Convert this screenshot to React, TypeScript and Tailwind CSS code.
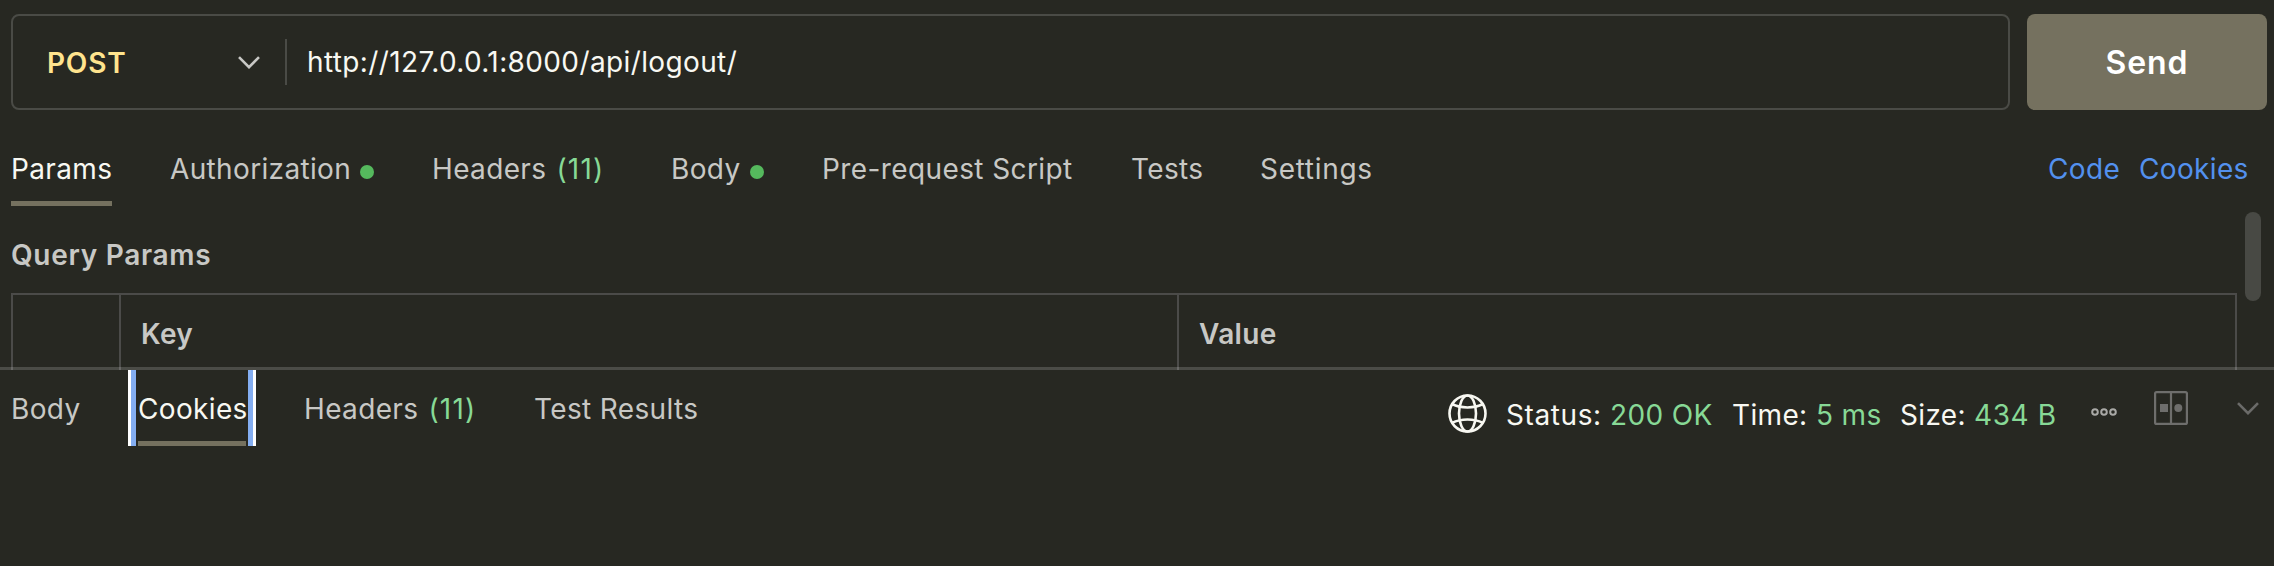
import type { ReactNode } from "react";

function Chevron({ className }: { className: string }) {
  return (
    <svg viewBox="0 0 22 13" fill="none" stroke="currentColor" strokeWidth="2.6" className={className}>
      <path d="M1 1.2 L11 11.2 L21 1.2" />
    </svg>
  );
}

function Globe() {
  return (
    <svg viewBox="0 0 39 39" fill="none" stroke="currentColor" strokeWidth="2.6" className="h-[39px] w-[39px] text-[#f8f8f2]">
      <circle cx="19.5" cy="19.5" r="18" />
      <ellipse cx="19.5" cy="19.5" rx="8.5" ry="18" />
      <path d="M4 10 C13 14.6 26 14.6 35 10" />
      <path d="M4 29 C13 24.4 26 24.4 35 29" />
    </svg>
  );
}

function Dots() {
  return (
    <svg viewBox="0 0 26 8" fill="none" stroke="currentColor" strokeWidth="2" className="h-2 w-[26px] text-[#a9a9a6]">
      <circle cx="4" cy="4" r="2.8" />
      <circle cx="13" cy="4" r="2.8" />
      <circle cx="22" cy="4" r="2.8" />
    </svg>
  );
}

function SplitPane() {
  return (
    <svg viewBox="0 0 34 34" fill="none" stroke="currentColor" strokeWidth="2.2" className="h-[34px] w-[34px] text-[#6e6e6c]">
      <rect x="1.1" y="1.1" width="31.8" height="31.8" rx="1.5" />
      <path d="M17 1 V33" />
      <rect x="6" y="13" width="8" height="8" fill="currentColor" stroke="none" />
      <circle cx="24.3" cy="17" r="4" fill="currentColor" stroke="none" />
    </svg>
  );
}

function Tab({ children, className = "" }: { children: ReactNode; className?: string }) {
  return <div className={`flex shrink-0 ${className}`}>{children}</div>;
}

function Dot() {
  return <span className="mt-[13px] ml-auto h-3.5 w-3.5 rounded-full bg-[#55b95d]" />;
}

function Count() {
  return <span className="tracking-[1.2px] text-[#87d996]">(11)</span>;
}

export default function App() {
  return (
    <div className="flex h-[566px] w-[2274px] flex-col overflow-hidden bg-[#272822] font-['Inter',sans-serif] text-[28px] leading-[34px] tracking-[0.35px] whitespace-nowrap text-[#c8c8c5]">
      <div className="flex h-[110px] shrink-0 gap-[17px] pt-3.5 pl-[11px]">
        <div className="flex h-24 w-[1999px] items-center rounded-[8px] border-2 border-[#4a4b46] pl-[34px]">
          <span className="w-[191px] pt-0.5 font-semibold tracking-[0.8px] text-[#ffe48e]">POST</span>
          <Chevron className="h-[13px] w-[22px]" />
          <span className="ml-[25px] h-[46px] w-0.5 bg-[#4a4b46]" />
          <span className="ml-5 tracking-[0.38px] text-[#f8f8f2]">http://127.0.0.1:8000/api/logout/</span>
        </div>
        <button className="h-24 w-60 rounded-[8px] bg-[#75715f] pt-0.5 text-[32px] font-semibold tracking-[0.9px] text-white">Send</button>
      </div>

      <div className="mt-[42px] flex h-[54px] shrink-0 pl-[11px]">
        <Tab className="mr-[58px] w-[101px] border-b-[5px] border-[#75715f] text-[#f8f8f2]">Params</Tab>
        <Tab className="mr-[58px] w-[204px]">Authorization<Dot /></Tab>
        <Tab className="w-[239px] gap-[10px]">Headers <Count /></Tab>
        <Tab className="mr-[58px] w-[93px]">Body<Dot /></Tab>
        <Tab className="w-[309px] tracking-[0.4px]">Pre-request Script</Tab>
        <Tab className="w-[129px]">Tests</Tab>
        <Tab className="tracking-[0.7px]">Settings</Tab>
        <div className="ml-auto flex pr-[26px] text-[#5391ee]">
          <span className="w-[91px]">Code</span>
          <span className="w-[109px]">Cookies</span>
        </div>
      </div>

      <div className="flex h-[161px] shrink-0 pl-[11px]">
        <div className="flex w-[2226px] flex-col">
          <h2 className="mt-8 h-[55px] shrink-0 font-semibold tracking-[0.7px]">Query Params</h2>
          <div className="flex h-[77px] shrink-0 border-2 border-b-0 border-[#4b4b49] leading-[79px] font-semibold">
            <div className="w-[108px] border-r-2 border-[#4b4b49]" />
            <div className="w-[1058px] border-r-2 border-[#4b4b49] pl-5">Key</div>
            <div className="pl-5">Value</div>
          </div>
        </div>
        <div className="mt-1.5 ml-2 h-[89px] w-4 rounded-full bg-[#484944]" />
      </div>

      <div className="flex h-[79px] shrink-0 border-t-[3px] border-white/17 pl-[11px]">
        <Tab className="w-[117px] pt-[22px]">Body</Tab>
        <div className="flex h-[76px] w-[128px] border-x-[3px] border-white">
          <div className="flex flex-1 border-x-[5px] border-[#84aef2] px-0.5">
            <Tab className="w-[108px] border-b-[5px] border-[#75715f] pt-[22px] text-[#f8f8f2]">Cookies</Tab>
          </div>
        </div>
        <Tab className="ml-[48px] w-[230px] gap-[10px] pt-[22px]">Headers <Count /></Tab>
        <Tab className="pt-[22px]">Test Results</Tab>
        <div className="ml-auto flex text-[#f8f8f2]">
          <div className="mr-[19px] pt-6"><Globe /></div>
          <span className="w-[104px] pt-7 tracking-[0.6px]">Status:</span>
          <span className="w-[122px] pt-7 text-[#87d996]">200 OK</span>
          <span className="w-[84px] pt-7">Time:</span>
          <span className="w-[84px] pt-7 text-[#87d996]">5 ms</span>
          <span className="w-[74px] pt-7">Size:</span>
          <span className="w-[117px] pt-7 tracking-[0.6px] text-[#87d996]">434 B</span>
          <div className="w-[63px] pt-[38px]"><Dots /></div>
          <div className="w-[83px] pt-[21px]"><SplitPane /></div>
          <div className="w-[37px] pt-8"><Chevron className="h-[13px] w-[22px] text-[#6b6b69]" /></div>
        </div>
      </div>
    </div>
  );
}
